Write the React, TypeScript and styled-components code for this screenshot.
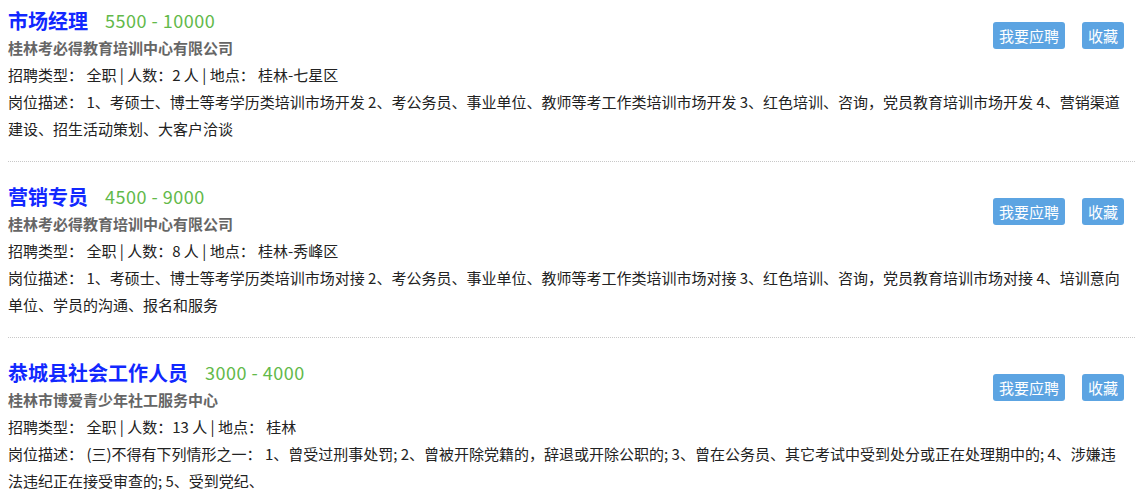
import React from "react"
import styled, { createGlobalStyle } from "styled-components"

interface Job {
  title: string
  salary: string
  company: string
  type: string
  count: number
  place: string
  desc: string
}

const jobs: Job[] = [
  {
    title: "市场经理",
    salary: "5500 - 10000",
    company: "桂林考必得教育培训中心有限公司",
    type: "全职",
    count: 2,
    place: "桂林-七星区",
    desc: "1、考硕士、博士等考学历类培训市场开发 2、考公务员、事业单位、教师等考工作类培训市场开发 3、红色培训、咨询，党员教育培训市场开发 4、营销渠道建设、招生活动策划、大客户洽谈",
  },
  {
    title: "营销专员",
    salary: "4500 - 9000",
    company: "桂林考必得教育培训中心有限公司",
    type: "全职",
    count: 8,
    place: "桂林-秀峰区",
    desc: "1、考硕士、博士等考学历类培训市场对接 2、考公务员、事业单位、教师等考工作类培训市场对接 3、红色培训、咨询，党员教育培训市场对接 4、培训意向单位、学员的沟通、报名和服务",
  },
  {
    title: "恭城县社会工作人员",
    salary: "3000 - 4000",
    company: "桂林市博爱青少年社工服务中心",
    type: "全职",
    count: 13,
    place: "桂林",
    desc: "(三)不得有下列情形之一： 1、曾受过刑事处罚; 2、曾被开除党籍的，辞退或开除公职的; 3、曾在公务员、其它考试中受到处分或正在处理期中的; 4、涉嫌违法违纪正在接受审查的; 5、受到党纪、",
  },
]

const GlobalStyle = createGlobalStyle`
  body {
    margin: 0;
    background: #fff;
    font-family: "Noto Sans CJK SC", "Noto Sans", sans-serif;
  }
`

const List = styled.div`
  padding: 0 8px;
`

const Card = styled.div`
  padding: 20px 0 19px;
  border-bottom: 1px dotted #c8c8c8;

  &:first-child {
    padding-top: 6px;
  }
`

const Actions = styled.div`
  float: right;
  display: flex;
  gap: 17px;
  margin: 16px 11px 0 0;
`

const Button = styled.button`
  height: 27px;
  padding: 0 6px;
  border: none;
  border-radius: 3px;
  background: #5ca4e2;
  color: #fff;
  font-family: inherit;
  font-size: 15px;
  line-height: 27px;
  cursor: pointer;
`

const TitleRow = styled.div`
  display: flex;
  align-items: center;
  height: 28px;
`

const Title = styled.a`
  color: #1228ff;
  font-size: 20px;
  font-weight: bold;
  text-decoration: none;
`

const Salary = styled.span`
  margin-left: 17px;
  color: #62b94a;
  font-size: 18px;
  letter-spacing: 0.5px;
`

const Line = styled.p<{ $bold?: boolean }>`
  margin: 0;
  font-size: 15px;
  line-height: 27px;
  color: ${p => (p.$bold ? "#666" : "#222")};
  font-weight: ${p => (p.$bold ? "bold" : "normal")};
`

const Desc = styled(Line)`
  padding-right: 13px;
`

export default function App() {
  return (
    <List>
      <GlobalStyle />
      {jobs.map(job => (
        <Card key={job.title}>
          <Actions>
            <Button>我要应聘</Button>
            <Button>收藏</Button>
          </Actions>
          <TitleRow>
            <Title href="#">{job.title}</Title>
            <Salary>{job.salary}</Salary>
          </TitleRow>
          <Line $bold>{job.company}</Line>
          <Line>
            招聘类型： {job.type} | 人数：{job.count} 人 | 地点： {job.place}
          </Line>
          <Desc>岗位描述： {job.desc}</Desc>
        </Card>
      ))}
    </List>
  )
}
